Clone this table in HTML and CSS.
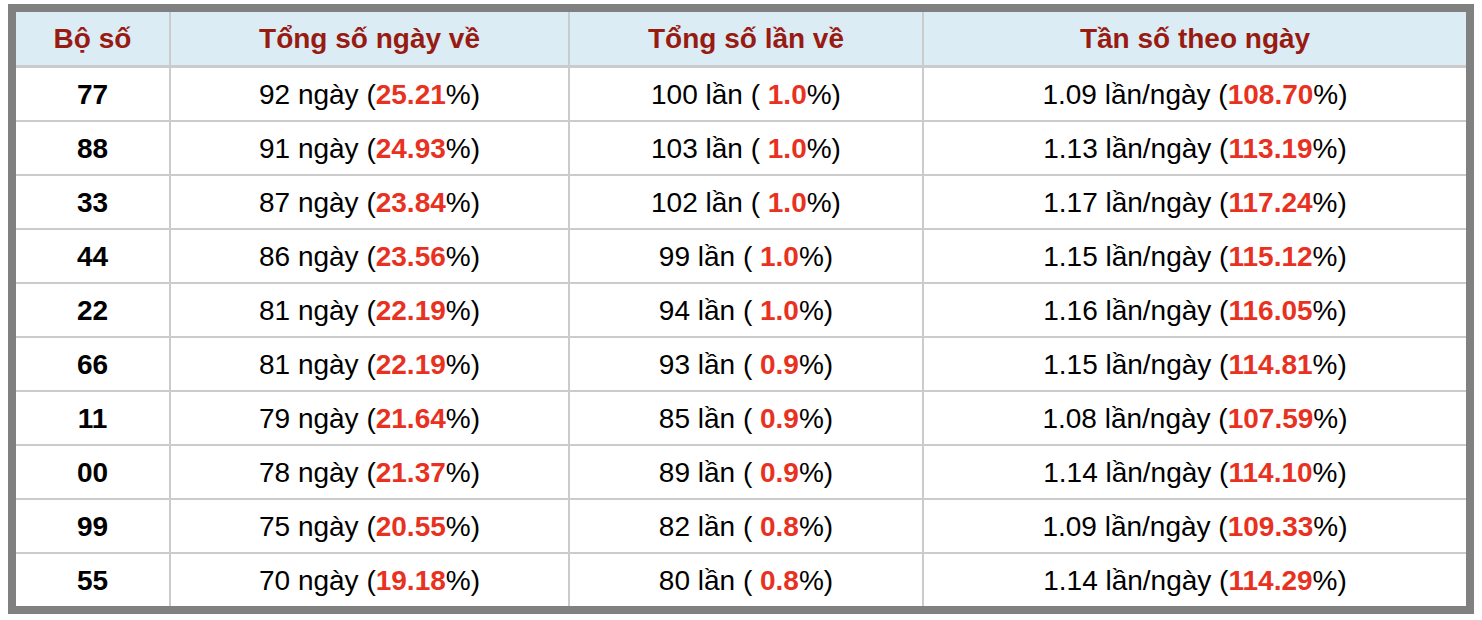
FILE: index.html
```html
<!DOCTYPE html>
<html lang="vi">
<head>
<meta charset="utf-8">
<title>Thống kê bộ số</title>
<link rel="stylesheet" href="styles.css">
</head>
<body>
<table class="stats">
  <colgroup>
    <col class="c1"><col class="c2"><col class="c3"><col class="c4">
  </colgroup>
  <thead>
    <tr><th>Bộ số</th><th>Tổng số ngày về</th><th>Tổng số lần về</th><th>Tần số theo ngày</th></tr>
  </thead>
  <tbody>
    <tr><td class="num">77</td><td>92 ngày (<b>25.21</b>%)</td><td>100 lần ( <b>1.0</b>%)</td><td>1.09 lần/ngày (<b>108.70</b>%)</td></tr>
    <tr><td class="num">88</td><td>91 ngày (<b>24.93</b>%)</td><td>103 lần ( <b>1.0</b>%)</td><td>1.13 lần/ngày (<b>113.19</b>%)</td></tr>
    <tr><td class="num">33</td><td>87 ngày (<b>23.84</b>%)</td><td>102 lần ( <b>1.0</b>%)</td><td>1.17 lần/ngày (<b>117.24</b>%)</td></tr>
    <tr><td class="num">44</td><td>86 ngày (<b>23.56</b>%)</td><td>99 lần ( <b>1.0</b>%)</td><td>1.15 lần/ngày (<b>115.12</b>%)</td></tr>
    <tr><td class="num">22</td><td>81 ngày (<b>22.19</b>%)</td><td>94 lần ( <b>1.0</b>%)</td><td>1.16 lần/ngày (<b>116.05</b>%)</td></tr>
    <tr><td class="num">66</td><td>81 ngày (<b>22.19</b>%)</td><td>93 lần ( <b>0.9</b>%)</td><td>1.15 lần/ngày (<b>114.81</b>%)</td></tr>
    <tr><td class="num">11</td><td>79 ngày (<b>21.64</b>%)</td><td>85 lần ( <b>0.9</b>%)</td><td>1.08 lần/ngày (<b>107.59</b>%)</td></tr>
    <tr><td class="num">00</td><td>78 ngày (<b>21.37</b>%)</td><td>89 lần ( <b>0.9</b>%)</td><td>1.14 lần/ngày (<b>114.10</b>%)</td></tr>
    <tr><td class="num">99</td><td>75 ngày (<b>20.55</b>%)</td><td>82 lần ( <b>0.8</b>%)</td><td>1.09 lần/ngày (<b>109.33</b>%)</td></tr>
    <tr><td class="num">55</td><td>70 ngày (<b>19.18</b>%)</td><td>80 lần ( <b>0.8</b>%)</td><td>1.14 lần/ngày (<b>114.29</b>%)</td></tr>
  </tbody>
</table>
</body>
</html>
```
FILE: styles.css
```css
html, body {
  background: #ffffff;
}
body {
  margin: 4px 8px;
  font-family: "Liberation Sans", Arial, sans-serif;
  color: #000;
}
.stats {
  width: 1466px;
  table-layout: fixed;
  border-collapse: separate;
  border-spacing: 0;
  border: 8px solid #808080;
  font-size: 28px;
}
.c1 { width: 155px; }
.c2 { width: 399px; }
.c3 { width: 354px; }
.c4 { width: 542px; }
.stats th, .stats td {
  padding: 0;
  text-align: center;
  vertical-align: middle;
  border-right: 2px solid #cbcbcb;
  border-bottom: 2px solid #cbcbcb;
  line-height: 32px;
}
.stats th:last-child, .stats td:last-child {
  border-right: 0;
}
.stats tbody tr:last-child td {
  border-bottom: 0;
}
.stats th {
  height: 53px;
  background: #dcecf5;
  color: #981b12;
  font-weight: bold;
  border-bottom-width: 3px;
}
.stats td {
  height: 51px;
  padding-top: 1px;
  font-weight: normal;
}
.stats td.num {
  font-weight: bold;
}
.stats td b {
  color: #e8321f;
  font-weight: bold;
}
```
